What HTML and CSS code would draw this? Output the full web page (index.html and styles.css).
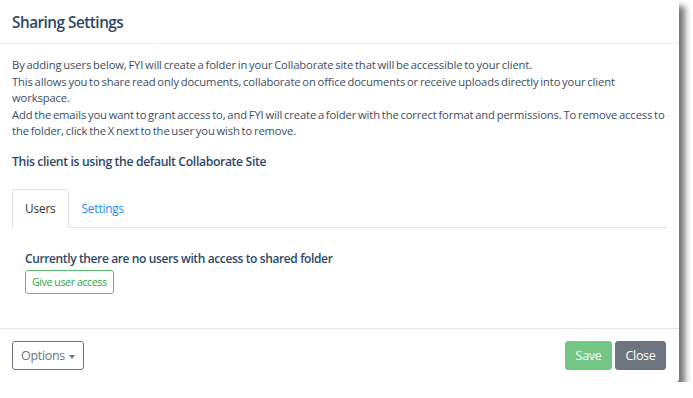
FILE: index.html
```html
<!DOCTYPE html>
<html lang="en">
<head>
    <meta charset="UTF-8">
    <title>Sharing Settings</title>
    <link rel="stylesheet" href="styles.css">
</head>
<body>
<div class="modal">
    <div class="modal-header">
        <h5>Sharing Settings</h5>
    </div>
    <div class="modal-body">
        <p class="intro">
            By adding users below, FYI will create a folder in your Collaborate site that will be accessible to your client.<br>
            This allows you to share read only documents, collaborate on office documents or receive uploads directly into your client workspace.<br>
            Add the emails you want to grant access to, and FYI will create a folder with the correct format and permissions. To remove access to the folder, click the X next to the user you wish to remove.
        </p>
        <h6 class="site">This client is using the default Collaborate Site</h6>
        <ul class="tabs">
            <li class="active"><a href="#">Users</a></li>
            <li><a href="#">Settings</a></li>
        </ul>
        <div class="tab-pane">
            <h6>Currently there are no users with access to shared folder</h6>
            <button class="btn-outline-success">Give user access</button>
        </div>
    </div>
    <div class="modal-footer">
        <button class="btn-options">Options <span class="caret"></span></button>
        <div class="actions">
            <button class="btn-save" disabled>Save</button>
            <button class="btn-close">Close</button>
        </div>
    </div>
</div>
</body>
</html>
```

FILE: styles.css
```css
body {
    margin: 0;
    padding: 0;
    background: #fff;
    font-family: "Open Sans", "Noto Sans", sans-serif;
    color: #3b4d62;
}

.modal {
    width: 679px;
    height: 382px;
    background: #fff;
    border-radius: 3px;
    box-shadow: 6px 6px 6px rgba(0, 0, 0, 0.55);
    display: flex;
    flex-direction: column;
}

.modal-header {
    height: 43px;
    border-bottom: 1px solid #eceeef;
    display: flex;
    align-items: center;
    padding: 0 12px;
}

.modal-header h5 {
    margin: 0;
    font-size: 15.3px;
    font-weight: 600;
    letter-spacing: -0.5px;
    color: #2d4766;
}

.modal-body {
    flex: 1;
    padding: 13px 12px 0;
}

.intro {
    margin: 0;
    font-size: 11.2px;
    letter-spacing: -0.1px;
    word-spacing: -1px;
    line-height: 16.5px;
}

.site {
    margin: 13px 0 0;
    font-size: 12.2px;
    font-weight: 600;
    letter-spacing: -0.35px;
    color: #2d4766;
    line-height: 18px;
}

.tabs {
    list-style: none;
    margin: 18px 0 0;
    padding: 0;
    display: flex;
    border-bottom: 1px solid #e3e6e8;
}

.tabs li {
    margin-bottom: -1px;
}

.tabs a {
    display: block;
    height: 37px;
    line-height: 37px;
    padding: 0 12px;
    font-size: 11.8px;
    letter-spacing: -0.15px;
    text-decoration: none;
    color: #1e8cf0;
    border: 1px solid transparent;
    border-radius: 4px 4px 0 0;
}

.tabs .active a {
    color: #333;
    border-color: #e3e6e8 #e3e6e8 #fff;
    background: #fff;
}

.tab-pane {
    padding: 22px 13px 0;
}

.tab-pane h6 {
    margin: 0;
    font-size: 12px;
    font-weight: 600;
    letter-spacing: -0.38px;
    color: #2d4766;
    line-height: 18px;
}

.btn-outline-success {
    margin-top: 2px;
    height: 24px;
    padding: 0 6px;
    font-family: inherit;
    font-size: 10.6px;
    letter-spacing: -0.4px;
    color: #28a745;
    background: #fff;
    border: 1px solid #5dbd72;
    border-radius: 3px;
}

.modal-footer {
    height: 53px;
    border-top: 1px solid #e3e6e8;
    display: flex;
    align-items: center;
    justify-content: space-between;
    padding: 0 13px 0 12px;
}

.modal-footer button {
    height: 29px;
    font-family: inherit;
    font-size: 12.5px;
    letter-spacing: -0.3px;
    border-radius: 3px;
    padding: 0 8px;
}

.btn-options {
    color: #6c757d;
    background: #fff;
    border: 1px solid #6c757d;
}

.caret {
    display: inline-block;
    vertical-align: middle;
    margin-left: 1px;
    border-top: 4px solid #6c757d;
    border-left: 3px solid transparent;
    border-right: 3px solid transparent;
}

.actions {
    display: flex;
    gap: 3px;
}

.actions button {
    padding: 0 9.5px;
}

.btn-save {
    color: #fff;
    background: #73c686;
    border: 1px solid #73c686;
}

.btn-close {
    color: #fff;
    background: #6c757d;
    border: 1px solid #6c757d;
}
```
